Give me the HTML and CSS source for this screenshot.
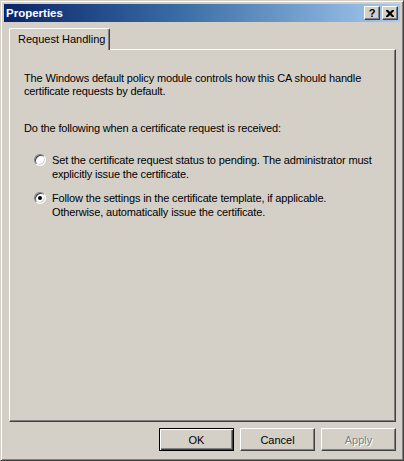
FILE: index.html
```html
<!DOCTYPE html>
<html>
<head>
<meta charset="utf-8">
<link rel="stylesheet" href="styles.css">
</head>
<body>
<div class="window">
  <div class="titlebar">
    <span class="title">Properties</span>
    <div class="tbtns">
      <span class="tbtn help">?</span>
      <span class="tbtn close"><svg width="8" height="7" viewBox="0 0 8 7"><path d="M0 0h2l2 2 2-2h2v1l-2.5 2.5L8 6v1H6L4 5 2 7H0V6l2.5-2.5L0 1z" fill="#000"/></svg></span>
    </div>
  </div>
  <div class="body">
    <div class="tabs"><div class="tab">Request Handling</div><div class="tabrest"></div></div>
    <div class="panel">
      <p class="para">The Windows default policy module controls how this CA should handle<br>certificate requests by default.</p>
      <p class="para q">Do the following when a certificate request is received:</p>
      <div class="opt">
        <span class="radio"></span>
        <span class="label">Set the certificate request status to pending. The administrator must<br>explicitly issue the certificate.</span>
      </div>
      <div class="opt">
        <span class="radio on"><span class="dot"></span></span>
        <span class="label">Follow the settings in the certificate template, if applicable.<br>Otherwise, automatically issue the certificate.</span>
      </div>
    </div>
    <div class="buttons">
      <div class="btn default"><span>OK</span></div>
      <div class="btn"><span>Cancel</span></div>
      <div class="btn disabled"><span>Apply</span></div>
    </div>
  </div>
</div>
</body>
</html>
```
FILE: styles.css
```css
html, body {
  margin: 0;
  padding: 0;
  background: #d4d0c8;
}
body {
  font-family: "Liberation Sans", Arial, sans-serif;
  font-size: 11px;
  color: #000;
}
.window {
  width: 404px;
  height: 461px;
  box-sizing: border-box;
  border: 1px solid;
  border-color: #d4d0c8 #404040 #404040 #d4d0c8;
  box-shadow: inset 1px 1px 0 #fff, inset -1px -1px 0 #808080;
  padding: 3px;
  display: flex;
  flex-direction: column;
}
.titlebar {
  height: 18px;
  background: linear-gradient(to right, #0a246a 0%, #3a6ea5 45%, #a6caf0 100%);
  display: flex;
  align-items: center;
  justify-content: space-between;
  padding-left: 2px;
  padding-right: 2px;
}
.title {
  color: #fff;
  font-weight: bold;
  font-size: 11.5px;
}
.tbtns {
  display: flex;
  gap: 2px;
}
.tbtn {
  width: 16px;
  height: 14px;
  box-sizing: border-box;
  background: #d4d0c8;
  border: 1px solid;
  border-color: #fff #404040 #404040 #fff;
  box-shadow: inset -1px -1px 0 #808080;
  display: flex;
  align-items: center;
  justify-content: center;
  font-weight: bold;
  font-size: 11px;
  line-height: 1;
}
.body {
  flex: 1;
  display: flex;
  flex-direction: column;
  padding: 6px 4px 5px 5px;
}
.tabs {
  display: flex;
  height: 21px;
}
.tab {
  width: 101px;
  box-sizing: border-box;
  border-top: 1px solid #fff;
  border-left: 1px solid #fff;
  border-right: 1px solid #404040;
  box-shadow: inset -1px 0 0 #808080;
  border-radius: 2px 2px 0 0;
  padding: 4px 0 0 8px;
  position: relative;
  z-index: 1;
  background: #d4d0c8;
  margin-bottom: -1px;
  height: 22px;
}
.tabrest {
  flex: 1;
}
.panel {
  height: 373px;
  box-sizing: border-box;
  border: 1px solid;
  border-color: #fff #404040 #404040 #fff;
  box-shadow: inset -1px -1px 0 #808080;
  padding: 22px 10px 0 14px;
  overflow: hidden;
  letter-spacing: -0.15px;
}
.para {
  margin: 0;
  line-height: 13px;
  white-space: nowrap;
}
.q {
  margin-top: 24px;
}
.opt {
  display: flex;
  align-items: flex-start;
  margin-left: 10px;
}
.opt + .opt {
  margin-top: 10px;
}
.q + .opt {
  margin-top: 18px;
}
.radio {
  width: 12px;
  height: 12px;
  box-sizing: border-box;
  border-radius: 50%;
  border: 1px solid;
  border-color: #808080 #fff #fff #808080;
  background: #fff;
  box-shadow: inset 1px 1px 0 #404040, inset -1px -1px 0 #d4d0c8;
  margin-top: 1px;
  flex: none;
  display: flex;
  align-items: center;
  justify-content: center;
}
.dot {
  width: 4px;
  height: 4px;
  background: #000;
  border-radius: 50%;
}
.label {
  margin-left: 6px;
  line-height: 14px;
  white-space: nowrap;
}
.buttons {
  display: flex;
  justify-content: flex-end;
  gap: 6px;
  margin-top: 6px;
}
.btn {
  width: 75px;
  height: 23px;
  box-sizing: border-box;
  border: 1px solid;
  border-color: #fff #404040 #404040 #fff;
  box-shadow: inset -1px -1px 0 #808080;
  display: flex;
  align-items: center;
  justify-content: center;
}
.btn.default {
  border: 1px solid #000;
  box-shadow: inset 1px 1px 0 #fff, inset -1px -1px 0 #404040, inset -2px -2px 0 #808080;
}
.btn.disabled span {
  color: #808080;
  text-shadow: 1px 1px 0 #fff;
}
```
